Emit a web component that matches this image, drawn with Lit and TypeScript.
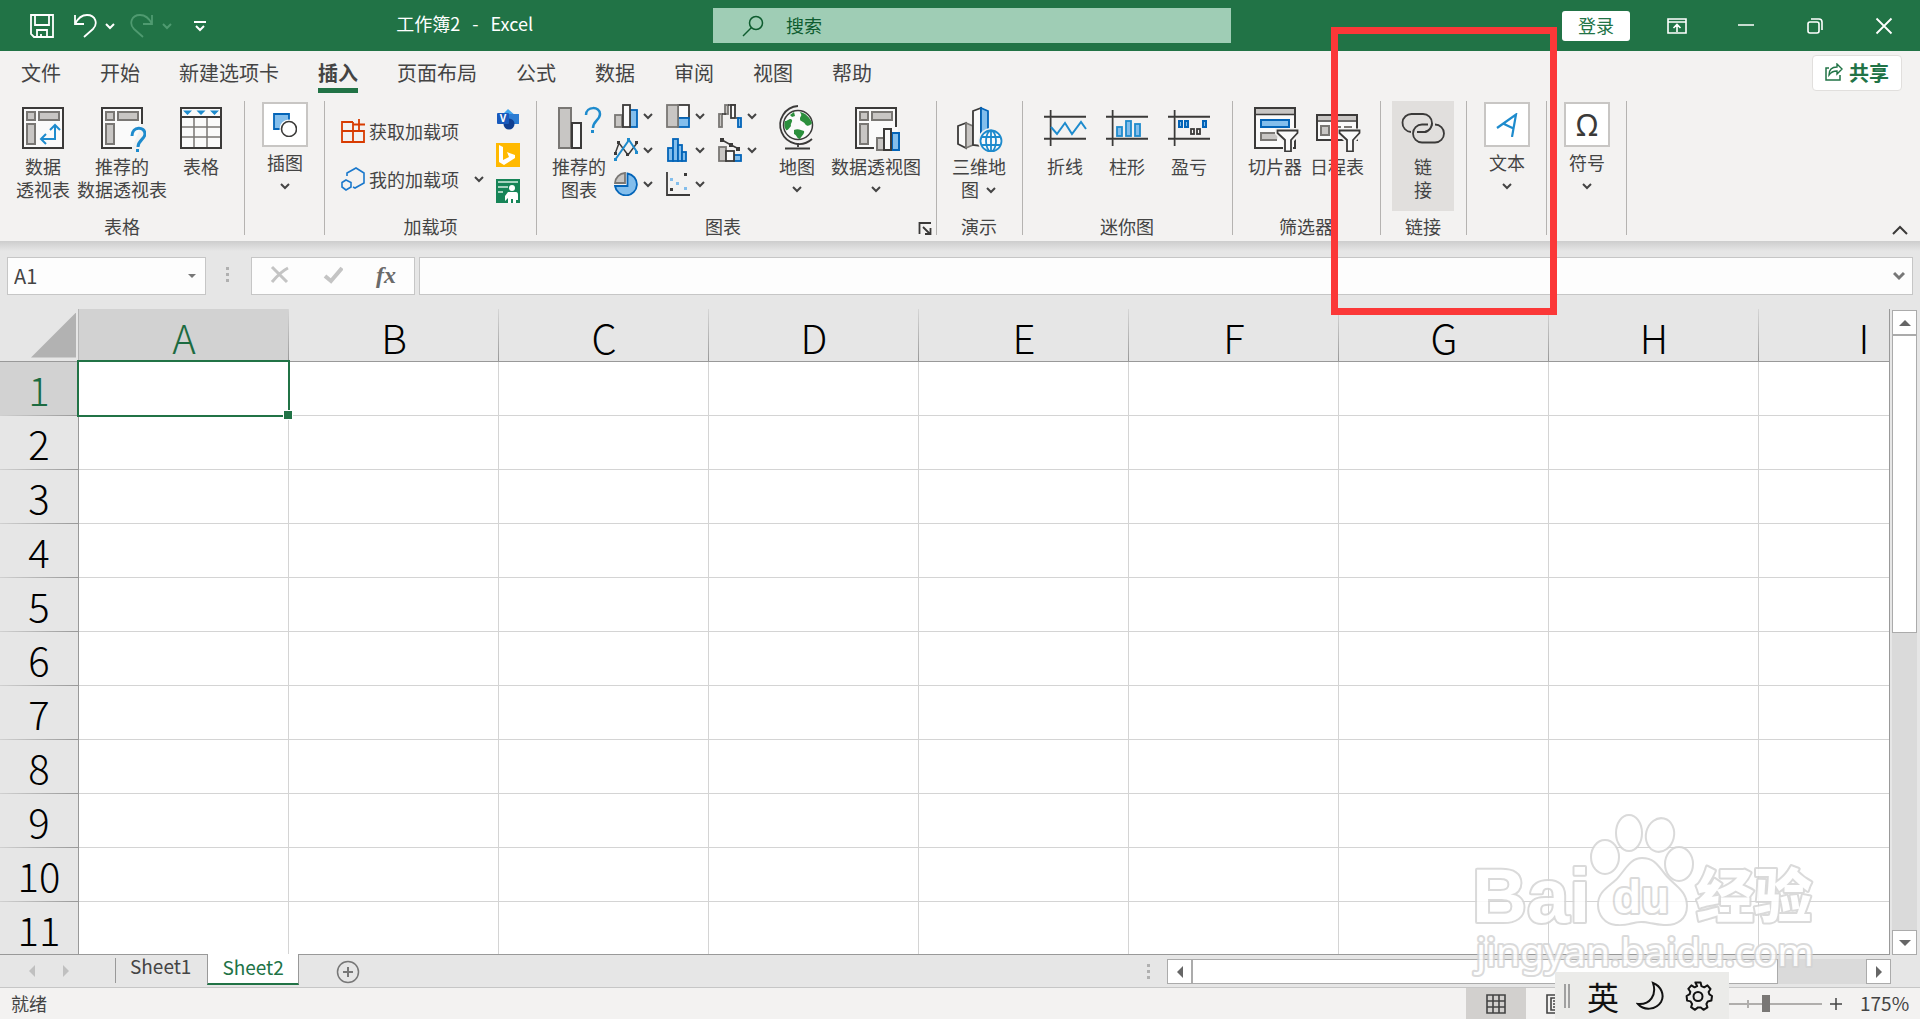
import { LitElement, html, svg, css, nothing } from "lit";
import { customElement, state } from "lit/decorators.js";
import { classMap } from "lit/directives/class-map.js";

const INK = "#3b3a39";
const GREY = "#797774";
const GREYF = "#c8c6c4";
const BLUE = "#1e8bcd";
const NAVY = "#0364b8";
const SKY = "#83beec";
const PAPER = "#fafafa";

const pivotFrame = svg`
  <g stroke=${GREY} stroke-width="2" fill=${GREYF}>
    <rect x="8" y="8" width="8" height="8"/><rect x="20" y="8" width="20" height="8"/><rect x="8" y="20" width="8" height="20"/>
  </g>`;

const big: Record<string, unknown> = {
  pivot: svg`<rect x="4" y="4" width="40" height="40" fill=${PAPER} stroke=${INK} stroke-width="2"/>${pivotFrame}
    <path d="M22 35H36V21M27 30l-5 5 5 5M31 26l5-5 5 5" fill="none" stroke=${BLUE} stroke-width="2"/>`,
  recpivot: svg`<path d="M34 44H4V4H44V20" fill=${PAPER} stroke=${INK} stroke-width="2"/>${pivotFrame}
    <path d="M34 32c0-10 13-10 13-2 0 5-7 6-7 13" fill="none" stroke=${BLUE} stroke-width="3"/><rect x="38" y="45" width="3" height="3" fill=${BLUE}/>`,
  table: svg`<rect x="4" y="4" width="40" height="40" fill=${PAPER} stroke=${INK} stroke-width="2"/>
    <path d="M17 13V43M30 13V43M5 23H43M5 33H43" stroke=${GREY} stroke-width="1.5"/><path d="M4 13H44" stroke=${INK} stroke-width="2"/>
    <path d="M6 6.500h9l-4.500 4.500zM19.500 6.500h9L24 11zM33 6.500h9l-4.500 4.500z" fill=${BLUE}/><rect x="4" y="4" width="40" height="40" fill="none" stroke=${INK} stroke-width="2"/>`,
  recchart: svg`<rect x="4" y="4" width="12" height="40" fill=${GREYF} stroke=${GREY} stroke-width="2"/>
    <rect x="17" y="19" width="9" height="25" fill=${PAPER} stroke=${INK} stroke-width="2"/>
    <path d="M31 11c0-9 14-9 14-1 0 6-7 7-7 14" fill="none" stroke=${BLUE} stroke-width="2.500"/><rect x="36" y="26" width="3" height="3" fill=${BLUE}/>`,
  globe: svg`<circle cx="25" cy="21" r="14.500" fill=${PAPER} stroke=${INK} stroke-width="1.500"/>
    <path d="M27 8c5 1 10 5 12 11-2 3-5 4-7 1-1-3-5-2-5-5s2-3 1-5zM12 17c3 0 3-2 6-2 3 2-1 4 0 7-2 2-3 5-5 4-2-3-2-6-1-9zM21 26c4-2 7 0 10 1 1 3-3 5-4 8-3 0-3-4-6-5zM17 11l4-3 1 4-3 1z" fill="#2b8f3c"/>
    <path d="M25 2a19 19 0 1 0 14 33M25 39v4M12 44.500H37" fill="none" stroke=${INK} stroke-width="1.800"/>`,
  pivotchart: svg`<path d="M23 44H4V4H44V22" fill=${PAPER} stroke=${INK} stroke-width="2"/>${pivotFrame}
    <rect x="22" y="22" width="24" height="24" fill=${PAPER} stroke="none"/>
    <path d="M44 4V23" stroke=${INK} stroke-width="2"/>
    <rect x="25" y="34" width="7" height="12" fill=${GREYF} stroke=${GREY} stroke-width="2"/>
    <rect x="40" y="29" width="7" height="17" fill=${SKY} stroke=${NAVY} stroke-width="2"/>
    <rect x="32" y="25" width="7" height="21" fill=${PAPER} stroke=${INK} stroke-width="2"/>`,
  map3d: svg`<path d="M3 22l8-3v25l-8-4z" fill=${PAPER} stroke=${INK} stroke-width="1.800"/><path d="M11 19l7 3v19l-7 3z" fill=${GREYF} stroke=${GREY} stroke-width="1.800"/>
    <path d="M18 7l8-3v38l-8-1z" fill=${PAPER} stroke=${INK} stroke-width="1.800"/><path d="M26 4l7 3v33h-7z" fill=${SKY} stroke=${NAVY} stroke-width="1.800"/>
    <circle cx="36" cy="37" r="13" fill="#f3f2f1"/><g fill="none" stroke=${BLUE} stroke-width="1.800"><circle cx="36" cy="37" r="10.500" fill=${PAPER}/><ellipse cx="36" cy="37" rx="5" ry="10.500"/><path d="M36 26v22M26 33H46M26 41H46"/></g>`,
  spline: svg`<path d="M3 13.500H45M3 35.500H45M10 6V42" stroke=${GREY} stroke-width="1"/><path d="M3 12.500H45M3 34.500H45M9.500 6V42" stroke=${INK} stroke-width="1.500"/>
    <path d="M10 23l6 7 8-11 7 11 9-12 5 7" fill="none" stroke=${BLUE} stroke-width="2"/>`,
  spcol: svg`<path d="M3 13.500H45M3 35.500H45M10 6V42" stroke=${GREY} stroke-width="1"/><path d="M3 12.500H45M3 34.500H45M9.500 6V42" stroke=${INK} stroke-width="1.500"/>
    <g fill=${SKY} stroke=${BLUE} stroke-width="1.800"><rect x="14" y="23" width="5" height="9"/><rect x="23" y="17" width="5" height="15"/><rect x="32" y="20" width="5" height="12"/></g>`,
  spwin: svg`<path d="M3 13.500H45M3 35.500H45M10 6V42" stroke=${GREY} stroke-width="1"/><path d="M3 12.500H45M3 34.500H45M9.500 6V42" stroke=${INK} stroke-width="1.500"/>
    <g fill=${SKY} stroke=${NAVY} stroke-width="2"><rect x="14" y="17" width="3" height="6"/><rect x="20" y="17" width="3" height="6"/><rect x="38" y="17" width="3" height="6"/></g>
    <g fill=${PAPER} stroke=${INK} stroke-width="1.800"><rect x="26" y="25" width="3" height="5"/><rect x="32" y="25" width="3" height="5"/></g>`,
  slicer: svg`<rect x="4" y="4" width="40" height="40" fill=${PAPER} stroke=${INK} stroke-width="2"/><path d="M5 5H43V10H5z" fill=${GREYF}/><path d="M4 10.500H44" stroke=${INK} stroke-width="1.500"/>
    <rect x="10" y="16" width="28" height="7" fill=${SKY} stroke=${NAVY} stroke-width="2"/><path d="M26 36H10V29H27" fill=${GREYF} stroke=${GREY} stroke-width="2"/>
    <path d="M24 24H48V32L42 38V48H32V38L24 30z" fill="#f3f2f1"/><path d="M26.500 26.500H46.500V29L40 36V47.500H34V36L26.500 29z" fill=${PAPER} stroke=${INK} stroke-width="1.800"/>`,
  timeline: svg`<rect x="4" y="11" width="40" height="25" fill=${PAPER} stroke=${INK} stroke-width="2"/><path d="M5 12H43V16H5z" fill=${GREYF}/><path d="M4 17H44" stroke=${INK} stroke-width="1.500"/>
    <path d="M8 22H16V31H8zM20 23H28M31 23H39" fill=${GREYF} stroke=${GREY} stroke-width="2"/>
    <path d="M24 24.500H48V32L42 38V48H32V38L24 30z" fill="#f3f2f1"/><path d="M26.500 26.500H46.500V29L40 36V47.500H34V36L26.500 29z" fill=${PAPER} stroke=${INK} stroke-width="1.800"/>`,
  link: svg`<g fill="none" stroke=${INK} stroke-width="1.800"><path d="M12 28a9 9 0 0 1 1-18H24a9 9 0 0 1 9 9 9 9 0 0 1-7 9H18"/><path d="M29 20H24a9 9 0 0 0-9 9 9 9 0 0 0 9 9H36a9 9 0 0 0 0-18" stroke="#e1dfdd" stroke-width="6"/><path d="M29 20.500H23a9 9 0 0 0 0 18H36a9 9 0 0 0 0-18"/><path d="M33 19a9 9 0 0 1-7 9H18"/></g>`,
};

const small: Record<string, unknown> = {
  column: svg`<rect x="1" y="11" width="7" height="12" fill=${GREYF} stroke=${GREY} stroke-width="1.800"/><rect x="16" y="6" width="7" height="17" fill=${SKY} stroke=${NAVY} stroke-width="1.800"/><rect x="9" y="1" width="7" height="22" fill=${PAPER} stroke=${INK} stroke-width="1.800"/>`,
  tree: svg`<rect x="12" y="1" width="11" height="13" fill=${PAPER} stroke=${INK} stroke-width="1.800"/><rect x="12" y="14" width="11" height="9" fill=${SKY} stroke=${NAVY} stroke-width="1.800"/><rect x="1" y="1" width="11" height="22" fill=${GREYF} stroke=${GREY} stroke-width="1.800"/>`,
  waterfall: svg`<g fill=${GREYF} stroke=${GREY} stroke-width="1.800"><rect x="1" y="10" width="3" height="13"/><rect x="7" y="1" width="3" height="9"/></g><path d="M4 10H8M10 1H18M18 14H21" stroke=${INK} stroke-width="1.500"/><rect x="13" y="1" width="4" height="13" fill=${PAPER} stroke=${INK} stroke-width="1.800"/><rect x="20" y="14" width="3" height="9" fill=${SKY} stroke=${NAVY} stroke-width="1.800"/>`,
  line: svg`<path d="M1 16L5 5l9 12L23 5" fill="none" stroke=${INK} stroke-width="1.500"/><path d="M1 22L15 2l8 12" fill="none" stroke=${BLUE} stroke-width="2"/><path d="M0 14h3v3H0zM3 3h3v3H3zM12 15h3v3h-3zM21 3h3v3h-3z" fill=${INK}/><path d="M0 20h3v3H0zM13 0h3v3h-3zM21 13h3v3h-3z" fill=${BLUE}/>`,
  histogram: svg`<g fill=${SKY} stroke=${NAVY} stroke-width="1.800"><rect x="2" y="10" width="5" height="13"/><rect x="7" y="1" width="5" height="22"/><rect x="12" y="7" width="4" height="16"/><rect x="16" y="14" width="4" height="9"/></g>`,
  combo: svg`<rect x="1" y="9" width="7" height="14" fill=${GREYF} stroke=${GREY} stroke-width="1.800"/><rect x="16" y="17" width="7" height="6" fill=${SKY} stroke=${NAVY} stroke-width="1.800"/><rect x="8" y="13" width="8" height="10" fill=${PAPER} stroke=${INK} stroke-width="1.800"/><path d="M4 2l9 5 8 4" fill="none" stroke=${INK} stroke-width="1.500"/><path d="M2 0h4v4H2zM11 5h4v4h-4zM18 9h4v4h-4z" fill=${INK}/>`,
  pie: svg`<path d="M13.500 1.500a11 11 0 1 1-12.500 12.500H13.500z" fill=${SKY} stroke=${NAVY} stroke-width="1.800"/><path d="M11 1V11H1A10.500 10.500 0 0 1 11 1z" fill=${GREYF} stroke=${GREY} stroke-width="1.800"/>`,
  scatter: svg`<path d="M1 0V23H24" fill="none" stroke=${INK} stroke-width="1.800"/><path d="M18 1h3v3h-3zM4 16h3v3H4z" fill=${INK}/><path d="M4 6h3v3H4zM10 10h3v3h-3zM18 15h3v3h-3z" fill=${SKY}/>`,
};

const chev = html`<svg class="chev" viewBox="0 0 12 12" aria-hidden="true"><path d="M2 4l4 4 4-4" fill="none" stroke="currentColor" stroke-width="2"/></svg>`;
const bigIcon = (k: string) => html`<svg class="i48" viewBox="0 0 48 48" aria-hidden="true">${big[k]}</svg>`;

interface Tool { icon: string; lines: string[]; arrow?: "below" | "inline"; active?: boolean; }

const TABS = ["文件", "开始", "新建选项卡", "插入", "页面布局", "公式", "数据", "审阅", "视图", "帮助"];
const CHARTS = [["column", "柱形图"], ["tree", "层次结构图"], ["waterfall", "瀑布图"], ["line", "折线图"], ["histogram", "统计图"], ["combo", "组合图"], ["pie", "饼图"], ["scatter", "散点图"]];
const COLS = "ABCDEFGHI".split("");
const ROWS = Array.from({ length: 11 }, (_, i) => i + 1);

@customElement("app-root")
export class AppRoot extends LitElement {
  @state() private tab = "插入";
  @state() private sheet = "Sheet2";

  static styles = css`
    :host { display: block; font-family: "Noto Sans CJK SC", "Noto Sans", sans-serif; color: #444; font-size: 18px; }
    * { box-sizing: border-box; }
    button, input { font: inherit; color: inherit; border: 0; background: none; padding: 0; margin: 0; border-radius: 0; }
    svg { display: block; flex: none; }
    .app { position: relative; height: 100vh; display: flex; flex-direction: column; background: #e6e6e6; overflow: hidden; }
    .chev { width: 12px; height: 12px; }
    .i48 { width: 48px; height: 48px; }
    .i24 { width: 24px; height: 24px; }
    .i20 { width: 20px; height: 20px; }

    .title { flex: none; height: 51px; background: #217346; color: #fff; display: grid; grid-template-columns: minmax(0, 713fr) minmax(0, 518fr) minmax(0, 689fr); align-items: center; }
    .left, .right, .quick, .doc { display: flex; align-items: center; }
    .left { padding-left: 30px; justify-content: space-between; }
    .quick .a { margin-left: 19px; }
    .quick .b { margin-left: 7px; }
    .quick .c { margin-left: 14px; }
    .quick .d { margin-left: 21px; }
    .off { color: #4f9a70; }
    .doc { padding: 0 180px 6px 0; line-height: 24px; gap: 12px; white-space: nowrap; }
    .search { height: 35px; background: #9fcdb5; color: #0e5c2f; display: flex; align-items: center; gap: 22px; padding-left: 29px; }
    .search input { flex: 1; min-width: 0; height: 35px; padding-bottom: 2px; outline: 0; }
    .search input::placeholder { color: #0e5c2f; opacity: 1; }
    .right { justify-content: flex-end; }
    .signin { width: 68px; height: 30px; line-height: 28px; padding-bottom: 2px; background: #fff; color: #217346; border-radius: 3px; margin-right: 12px; }
    .win { width: 69px; height: 51px; display: flex; justify-content: center; align-items: center; }
    .win:last-child { margin-right: 2px; }

    .ribbon { flex: none; background: #f3f2f1; }
    .tabs { height: 49px; display: flex; padding: 0 18px 0 21px; gap: 39px; font-size: 20px; }
    .tab { height: 42px; padding-top: 7px; line-height: 30px; border-bottom: 5px solid transparent; white-space: nowrap; }
    .tab.on { font-weight: 700; border-bottom-color: #217346; }
    .share { margin: 4px 0 0 auto; width: 90px; height: 36px; padding-bottom: 2px; display: flex; align-items: center; justify-content: center; gap: 6px; background: #fff; border: 1px solid #e1dfdd; border-radius: 4px; color: #217346; font-weight: 700; }
    .groups { display: flex; padding: 1px 0 6px 1px; }
    .group { height: 134px; flex: none; display: flex; flex-direction: column; border-right: 1px solid #b5b3b1; padding: 0 12px 0 11px; }
    .group.boxed { padding: 0 16px 0 17px; }
    .group.addins { padding: 0 16px; }
    .body { height: 118px; display: flex; align-items: flex-start; }
    .foot { height: 16px; line-height: 14px; display: flex; }
    .foot span { flex: 1; text-align: center; }
    .launch { width: 14px; height: 14px; margin: 2px -8px 0 0; }
    .with-launch span { padding-right: 20px; }
    .tool { min-width: 62px; height: 110px; padding: 3px 3px 0; display: flex; flex-direction: column; align-items: center; line-height: 23px; white-space: nowrap; }
    .tool .i48 { margin-bottom: 3px; }
    .tool.active { background: #e1dfdd; }
    .tool .chev { margin-top: 5px; }
    .tool .row { display: flex; align-items: center; gap: 6px; }
    .tool .row .chev { margin-top: 0; }
    .boxtool { width: 46px; padding-top: 1px; display: flex; flex-direction: column; align-items: center; line-height: 24px; white-space: nowrap; }
    .frame { width: 46px; height: 45px; background: #fff; border: 2px solid #c8c6c4; display: flex; align-items: center; justify-content: center; margin-bottom: 3px; }
    .omega { font: 30px/30px "Noto Sans", sans-serif; color: #3b3a39; }
    .boxtool .chev { margin-top: 6px; }
    .charts { display: grid; grid-template-columns: repeat(3, 52px); grid-auto-rows: 30px; row-gap: 4px; }
    .charts button { display: flex; align-items: center; gap: 4px; padding-left: 4px; }
    .addrows { width: 144px; padding-top: 6px; margin-right: 11px; }
    .addrows button { width: 144px; height: 48px; display: flex; align-items: center; gap: 4px; white-space: nowrap; }
    .addrows .chev { margin-left: auto; }
    .addicons { padding-top: 6px; display: flex; flex-direction: column; gap: 12px; }
    .collapse { margin: auto 12px 0 auto; }

    .formula { flex: none; height: 68px; display: flex; align-items: flex-start; padding: 16px 7px 0; background: linear-gradient(#cdcdcd, #e6e6e6 10px); }
    .fbox { height: 38px; background: #fdfdfd; border: 1px solid #c6c6c6; display: flex; align-items: center; }
    .namebox { width: 199px; padding: 0 9px 0 6px; }
    .namebox input { width: 160px; font-size: 20px; height: 34px; padding-bottom: 2px; }
    .namebox button { margin-left: auto; }
    .dots { width: 3px; height: 15px; background: repeating-linear-gradient(#b0b0b0 0 3px, transparent 3px 6px); }
    .formula .dots { margin: 10px 22px 0 20px; }
    .fbtns { width: 164px; justify-content: space-between; padding: 0 16px 2px; margin-right: 4px; }
    .fx { font: italic 700 24px/24px "Liberation Serif", serif; color: #6a6a6a; }
    .fbtns button { width: 24px; display: flex; justify-content: center; }
    .finput { flex: 1; min-width: 0; padding-right: 7px; }
    .finput input { flex: 1; min-width: 0; height: 34px; padding: 0 8px; outline: 0; }

    .work { flex: 1; min-height: 0; display: flex; }
    .view { flex: 1; min-width: 0; overflow: hidden; background: #fff; border-right: 1px solid #999; border-bottom: 1px solid #999; }
    table { border-collapse: separate; border-spacing: 0; }
    th { font-weight: 300; font-size: 40px; line-height: 46px; color: #000; padding: 0; text-align: center; background: #e6e6e6; }
    thead th { height: 53px; min-width: 210px; padding-top: 3px; border-bottom: 1px solid #999; background: linear-gradient(#d6d6d6, #999) right / 1px 100% no-repeat #e6e6e6; }
    thead th.corner { min-width: 79px; width: 79px; padding: 0; background: linear-gradient(#b5b5b5, #b5b5b5) right / 1px 100% no-repeat #e6e6e6; }
    .corner button { display: block; margin: 0 3px 0 auto; width: 45px; height: 45px; background: #b2b2b2; clip-path: polygon(100% 0, 100% 100%, 0 100%); }
    tbody th { height: 54px; border-right: 1px solid #999; background: linear-gradient(90deg, #d0d0d0, #999) bottom / 100% 1px no-repeat #e6e6e6; }
    th.sel, thead th.sel { background-color: #d2d2d2; color: #1c6b41; }
    td { padding: 0; border-right: 1px solid #d4d4d4; border-bottom: 1px solid #d4d4d4; }
    td.cursor { position: relative; }
    .ring { position: absolute; inset: -2px; border: 2px solid #217346; }
    .ring::after { content: ""; position: absolute; right: -5px; bottom: -5px; width: 8px; height: 8px; background: #217346; border: 1px solid #fff; }
    .vbar { flex: none; width: 30px; padding: 1px 3px 0 2px; display: flex; flex-direction: column; }
    .sbtn { width: 25px; height: 25px; flex: none; background: #fff; border: 1px solid #ababab; color: #666; display: flex; align-items: center; justify-content: center; }
    .track { flex: 1; background: #dadada; display: flex; }
    .vbar .track { flex-direction: column; }
    .vbar .thumb { height: 50%; background: #fff; border: 1px solid #ababab; }
    .hbar .thumb { width: 87%; background: #fff; border: 1px solid #ababab; }

    .sheets { flex: none; height: 33px; border-bottom: 1px solid #c6c6c6; display: flex; align-items: flex-start; font: 19px/22px "Noto Sans CJK SC", sans-serif; }
    .nav { display: flex; gap: 26px; padding: 10px 45px 0 28px; color: #c0c0c0; }
    .stab { display: flex; align-items: flex-start; height: 25px; margin-top: 3px; padding: 0 16px; line-height: 16px; }
    .first { border-left: 1px solid #999; padding-left: 14px; }
    .stab.on { position: relative; height: 31px; margin-top: -1px; line-height: 25px; background: #fff; color: #217346; border: solid #999; border-width: 0 1px; border-bottom: 2px solid #217346; padding: 0 14px; }
    .add { margin: 5px 0 0 37px; }
    .hbar { margin: 4px 29px 0 auto; width: 744px; display: flex; align-items: flex-start; }
    .hbar .dots { margin: 5px 17px 0 0; }
    .hbar .track { height: 25px; }

    .status { flex: none; height: 31px; background: #f3f2f1; display: flex; align-items: center; padding: 0 11px; }
    .status .ready { flex: 1; padding-bottom: 2px; }
    .vbtn { width: 60px; height: 31px; display: flex; align-items: center; justify-content: center; }
    .vbtn.on { background: #d2d0ce; }
    .zoom { display: flex; align-items: center; gap: 7px; margin-left: 7px; }
    .zoom input { appearance: none; width: 148px; height: 18px; background: linear-gradient(#b0aeac, #b0aeac) 50% 50% / 2px 8px no-repeat, linear-gradient(#b0aeac, #b0aeac) 0 50% / 100% 2px no-repeat; }
    .zoom input::-webkit-slider-thumb { appearance: none; width: 8px; height: 17px; background: #797775; }
    .sign { width: 14px; height: 14px; }
    .pct { margin-left: 17px; width: 49px; padding-bottom: 2px; font-size: 19px; text-align: right; white-space: nowrap; }

    .ime { position: absolute; right: 191px; bottom: 0; width: 174px; height: 47px; background: #ebebe9; color: #111; display: flex; align-items: center; padding-left: 9px; }
    .grip { width: 6px; height: 24px; border: solid #a0a0a0; border-width: 0 2px; margin-right: 17px; }
    .ime .lang { font-size: 32px; line-height: 40px; margin-right: 17px; }
    .ime .moon { margin-right: 17px; }
    .i30 { width: 30px; height: 30px; }
    .mark { position: absolute; right: 96px; bottom: 32px; width: 360px; height: 184px; pointer-events: none; }
    .mark .brand { font: 700 76px "Liberation Sans", sans-serif; }
    .mark .cjk { font: 900 58px "Noto Sans CJK SC", sans-serif; }
    .mark .du { font: 700 46px "Liberation Sans", sans-serif; }
    .mark .url { font: 400 39px "Noto Sans", sans-serif; }
    .callout { position: absolute; left: 1331px; top: 27px; width: 226px; height: 288px; border: 7px solid #fb3838; pointer-events: none; }
  `;

  private tool(t: Tool) {
    const last = t.lines[t.lines.length - 1];
    return html`<button class=${classMap({ tool: true, active: !!t.active })}>
      ${bigIcon(t.icon)}
      ${t.lines.slice(0, t.arrow === "inline" ? -1 : undefined).map((l) => html`<span>${l}</span>`)}
      ${t.arrow === "inline" ? html`<span class="row">${last}${chev}</span>` : nothing}
      ${t.arrow === "below" ? chev : nothing}
    </button>`;
  }

  private group(name: string, body: unknown, launch = false) {
    return html`<section class="group">
      <div class="body">${body}</div>
      <div class=${classMap({ foot: true, "with-launch": launch })}><span>${name}</span>
        ${launch ? html`<button class="launch" aria-label="图表选项"><svg viewBox="0 0 14 14" width="14" height="14"><path d="M1.500 13V2H13M5 6l7 7M12.500 7V13H7" fill="none" stroke="#3b3a39" stroke-width="1.800"/></svg></button>` : nothing}
      </div>
    </section>`;
  }

  private boxed(name: string, icon: unknown) {
    return html`<section class="group boxed"><button class="boxtool"><span class="frame">${icon}</span><span>${name}</span>${chev}</button></section>`;
  }

  private titleBar() {
    return html`<header class="title">
      <div class="left">
        <div class="quick">
          <button aria-label="保存"><svg class="i24" viewBox="0 0 24 24"><path d="M1 1H23V23H4L1 20zM5 1V11H19V1M7 23V16H17V23M11 20V23" fill="none" stroke="#fff" stroke-width="1.800"/></svg></button>
          <button class="a" aria-label="撤消"><svg class="i24" viewBox="0 0 24 24"><path d="M2 1V10H11M2 10C5 4 9 1 14 1c9 0 11 9 6 14L11 23" fill="none" stroke="#fff" stroke-width="1.800"/></svg></button>
          <button class="b" aria-label="撤消列表">${chev}</button>
          <button class="c off" aria-label="恢复"><svg class="i24" viewBox="0 0 24 24"><path d="M22 1V10H13M22 10C19 4 15 1 10 1 1 1-1 10 4 15L13 23" fill="none" stroke="currentColor" stroke-width="1.800"/></svg></button>
          <button class="b off" aria-label="恢复列表">${chev}</button>
          <button class="d" aria-label="自定义快速访问工具栏"><svg class="chev" viewBox="0 0 12 12"><path d="M0 2H12M2 6l4 4 4-4" fill="none" stroke="#fff" stroke-width="2"/></svg></button>
        </div>
        <div class="doc"><span>工作簿2</span><span>-</span><span>Excel</span></div>
      </div>
      <label class="search">
        <svg width="22" height="22" viewBox="0 0 22 22"><circle cx="14" cy="8" r="6.500" fill="none" stroke="#0e5c2f" stroke-width="1.500"/><path d="M9.500 12.500L1 21" stroke="#0e5c2f" stroke-width="1.500"/></svg>
        <input type="search" placeholder="搜索" aria-label="搜索">
      </label>
      <div class="right">
        <button class="signin">登录</button>
        <button class="win" aria-label="功能区显示选项"><svg class="i20" viewBox="0 0 20 20"><path d="M1 3H19V17H1zM1 6H19M10 16V9M6.500 12L10 8.500 13.500 12" fill="none" stroke="#fff" stroke-width="1.600"/></svg></button>
        <button class="win" aria-label="最小化"><svg class="i20" viewBox="0 0 20 20"><path d="M2 9H18" stroke="#fff" stroke-width="1.500"/></svg></button>
        <button class="win" aria-label="还原"><svg class="i20" viewBox="0 0 20 20"><rect x="3" y="6" width="11" height="11" rx="2" fill="none" stroke="#fff" stroke-width="1.600"/><path d="M6 3H14a3 3 0 0 1 3 3V14" fill="none" stroke="#fff" stroke-width="1.600"/></svg></button>
        <button class="win" aria-label="关闭"><svg class="i20" viewBox="0 0 20 20"><path d="M2.500 2.500l15 15M17.500 2.500l-15 15" stroke="#fff" stroke-width="1.800"/></svg></button>
      </div>
    </header>`;
  }

  private ribbon() {
    return html`<div class="ribbon">
      <nav class="tabs">
        ${TABS.map((t) => html`<button class=${classMap({ tab: true, on: t === this.tab })} @click=${() => (this.tab = t)}>${t}</button>`)}
        <button class="share"><svg width="18" height="18" viewBox="0 0 18 18"><path d="M4 5H1V17H15V12" fill="none" stroke="#217346" stroke-width="1.500"/><path d="M4 12c0-5 3-8 8-8V1l5 5-5 5V8C8 8 6 9 4 12z" fill="none" stroke="#217346" stroke-width="1.400"/></svg>共享</button>
      </nav>
      <div class="groups">
        ${this.group("表格", [this.tool({ icon: "pivot", lines: ["数据", "透视表"] }), this.tool({ icon: "recpivot", lines: ["推荐的", "数据透视表"] }), this.tool({ icon: "table", lines: ["表格"] })])}
        ${this.boxed("插图", html`<svg class="i24" viewBox="0 0 24 24"><path d="M1 1H16V16H1z" fill=${SKY} stroke=${NAVY} stroke-width="1.800"/><circle cx="16" cy="16" r="9.500" fill="#fff"/><circle cx="16" cy="16" r="7.500" fill="#fff" stroke=${INK} stroke-width="1.600"/></svg>`)}
        <section class="group addins">
          <div class="body">
            <div class="addrows">
              <button><svg class="i24" viewBox="0 0 24 24"><path d="M12 3H1V23H23V12H1M12 3V23M18 0V11M12.500 5.500H24" fill="none" stroke="#d83b01" stroke-width="1.800"/></svg>获取加载项</button>
              <button><svg class="i24" viewBox="0 0 24 24"><path d="M6 9V6l9-5 8 5V16l-9 5-2-1M5 13l5 2.500V20l-5 3-4-3V15.500z" fill="none" stroke="#1a78cc" stroke-width="1.600"/></svg>我的加载项${chev}</button>
            </div>
            <div class="addicons">
              <button aria-label="Visio"><svg class="i24" viewBox="0 0 24 24"><path d="M12 2l8 7-8 8-7-8z" fill="#41a5ee"/><path d="M12 7H23V17H12z" fill="#2b7cd3"/><circle cx="13" cy="17" r="5.500" fill="#103f91"/><rect x="1" y="6" width="12" height="11" rx="1" fill="#185abd"/><text x="7" y="15" font-size="10" font-weight="700" fill="#fff" text-anchor="middle" font-family="Open Sans, sans-serif">V</text></svg></button>
              <button aria-label="必应地图"><svg class="i24" viewBox="0 0 24 24"><path d="M0 0H24V24H0z" fill="#ffb900"/><path d="M3 2l4 2V17l6-3-2-5 8 3v3l-11 7-5-3z" fill="#fff"/></svg></button>
              <button aria-label="人员图表"><svg class="i24" viewBox="0 0 24 24"><path d="M0 0H24V24H0z" fill="#168457"/><path d="M2 2H22V4H2zM2 7H12V9H2zM2 12H7V14H2z" fill="#a5d3bf"/><circle cx="16" cy="9" r="3" fill="#fff"/><path d="M12 13H20q2 0 2 3v5h-2v3h-3v-4h-2v4h-3v-5l-3 3V17z" fill="#fff"/></svg></button>
            </div>
          </div>
          <div class="foot"><span>加载项</span></div>
        </section>
        ${this.group("图表", [
          this.tool({ icon: "recchart", lines: ["推荐的", "图表"] }),
          html`<div class="charts">${CHARTS.map(([k, n]) => html`<button aria-label=${n}><svg class="i24" viewBox="0 0 24 24">${small[k]}</svg>${chev}</button>`)}</div>`,
          this.tool({ icon: "globe", lines: ["地图"], arrow: "below" }),
          this.tool({ icon: "pivotchart", lines: ["数据透视图"], arrow: "below" }),
        ], true)}
        ${this.group("演示", this.tool({ icon: "map3d", lines: ["三维地", "图"], arrow: "inline" }))}
        ${this.group("迷你图", [this.tool({ icon: "spline", lines: ["折线"] }), this.tool({ icon: "spcol", lines: ["柱形"] }), this.tool({ icon: "spwin", lines: ["盈亏"] })])}
        ${this.group("筛选器", [this.tool({ icon: "slicer", lines: ["切片器"] }), this.tool({ icon: "timeline", lines: ["日程表"] })])}
        ${this.group("链接", this.tool({ icon: "link", lines: ["链", "接"], active: true }))}
        ${this.boxed("文本", html`<svg class="i24" viewBox="0 0 24 24"><path d="M2 15L21 1.500 17 24M8 10.500L18.500 15.500" fill="none" stroke=${BLUE} stroke-width="2.200"/></svg>`)}
        ${this.boxed("符号", html`<span class="omega">Ω</span>`)}
        <button class="collapse" aria-label="折叠功能区"><svg width="16" height="10" viewBox="0 0 16 10"><path d="M1 9l7-7 7 7" fill="none" stroke="#3b3a39" stroke-width="2"/></svg></button>
      </div>
    </div>`;
  }

  private formulaBar() {
    return html`<div class="formula">
      <div class="fbox namebox"><input aria-label="名称框" value="A1"><button aria-label="名称列表"><svg width="8" height="4" viewBox="0 0 8 4"><path d="M0 0H8L4 4z" fill="#777"/></svg></button></div>
      <span class="dots"></span>
      <div class="fbox fbtns">
        <button aria-label="取消"><svg class="i20" viewBox="0 0 20 20"><path d="M2 2l15 15M18 3C12 6 7 11 2 17" fill="none" stroke="#c4c4c4" stroke-width="3"/></svg></button>
        <button aria-label="输入"><svg class="i20" viewBox="0 0 20 20"><path d="M2 11l6 5L19 3" fill="none" stroke="#c4c4c4" stroke-width="4"/></svg></button>
        <button class="fx" aria-label="插入函数">fx</button>
      </div>
      <div class="fbox finput"><input aria-label="编辑栏"><button aria-label="展开编辑栏"><svg width="12" height="10" viewBox="0 0 12 10"><path d="M1 2l5 5 5-5" fill="none" stroke="#777" stroke-width="3"/></svg></button></div>
    </div>`;
  }

  private arrow(d: string) {
    return html`<svg width="12" height="12" viewBox="0 0 12 12"><path d=${d} fill="currentColor"/></svg>`;
  }

  private grid() {
    return html`<div class="work">
      <div class="view">
        <table>
          <thead><tr><th class="corner"><button aria-label="全选"></button></th>${COLS.map((c, i) => html`<th scope="col" class=${i ? "" : "sel"}>${c}</th>`)}</tr></thead>
          <tbody>${ROWS.map((r) => html`<tr><th scope="row" class=${r === 1 ? "sel" : ""}>${r}</th>${COLS.map((_, i) => (r === 1 && i === 0 ? html`<td class="cursor"><div class="ring"></div></td>` : html`<td></td>`))}</tr>`)}</tbody>
        </table>
      </div>
      <div class="vbar">
        <button class="sbtn" aria-label="向上滚动">${this.arrow("M0 9L6 3l6 6z")}</button>
        <div class="track"><div class="thumb"></div></div>
        <button class="sbtn" aria-label="向下滚动">${this.arrow("M0 3L6 9l6-6z")}</button>
      </div>
    </div>`;
  }

  private bottom() {
    return html`<div class="sheets">
      <div class="nav"><button aria-label="上一个工作表"><svg width="8" height="12" viewBox="0 0 8 12"><path d="M7 0V12L1 6z" fill="currentColor"/></svg></button><button aria-label="下一个工作表"><svg width="8" height="12" viewBox="0 0 8 12"><path d="M1 0V12L7 6z" fill="currentColor"/></svg></button></div>
      <button class=${classMap({ stab: true, first: this.sheet !== "Sheet1", on: this.sheet === "Sheet1" })} @click=${() => (this.sheet = "Sheet1")}>Sheet1</button>
      <button class=${classMap({ stab: true, on: this.sheet === "Sheet2" })} @click=${() => (this.sheet = "Sheet2")}>Sheet2</button>
      <button class="add" aria-label="新工作表"><svg width="24" height="24" viewBox="0 0 24 24"><circle cx="12" cy="12" r="10.500" fill="none" stroke="#777" stroke-width="1.500"/><path d="M12 7V17M7 12H17" stroke="#777" stroke-width="2"/></svg></button>
      <div class="hbar"><span class="dots"></span>
        <button class="sbtn" aria-label="向左滚动">${this.arrow("M9 0V12L3 6z")}</button>
        <div class="track"><div class="thumb"></div></div>
        <button class="sbtn" aria-label="向右滚动">${this.arrow("M3 0V12L9 6z")}</button>
      </div>
    </div>
    <footer class="status">
      <span class="ready">就绪</span>
      <button class="vbtn on" aria-label="普通"><svg class="i20" viewBox="0 0 20 20"><path d="M1 1H19V19H1zM7 1V19M13 1V19M1 7H19M1 13H19" fill="none" stroke="#444" stroke-width="1.600"/></svg></button>
      <button class="vbtn" aria-label="页面布局"><svg class="i20" viewBox="0 0 20 20"><path d="M1 1H19V19H1zM5 4H15V16H5zM7 7H13M7 10H13M7 13H13" fill="none" stroke="#444" stroke-width="1.600"/></svg></button>
      <button class="vbtn" aria-label="分页预览"><svg class="i20" viewBox="0 0 20 20"><path d="M1 1H19V19H1zM1 12H12V1" fill="none" stroke="#444" stroke-width="1.600"/></svg></button>
      <div class="zoom">
        <button aria-label="缩小"><svg class="sign" viewBox="0 0 14 14"><path d="M1 7H13" stroke="#444" stroke-width="1.500"/></svg></button>
        <input type="range" min="0" max="100" value="63" aria-label="缩放">
        <button aria-label="放大"><svg class="sign" viewBox="0 0 14 14"><path d="M1 7H13M7 1V13" stroke="#444" stroke-width="1.500"/></svg></button>
      </div>
      <span class="pct">175%</span>
    </footer>`;
  }

  private watermark() {
    const shapes = svg`
      <text class="brand" x="8" y="119">Bai</text>
      <text class="cjk" x="232" y="114">经验</text>
      <text class="url" x="12" y="163">jingyan.baidu.com</text>
      <ellipse cx="141" cy="54" rx="13" ry="16"/><ellipse cx="165" cy="30" rx="12" ry="17"/><ellipse cx="196" cy="32" rx="13" ry="16" transform="rotate(14 196 32)"/><ellipse cx="215" cy="61" rx="13" ry="16"/>
      <path d="M178 56c14 0 17 11 26 20s18 14 18 27-10 19-22 18-15-3-23-3-14 4-25 3-17-10-17-19c0-14 12-18 20-27s12-19 23-19z"/>`;
    return html`<svg class="mark" viewBox="0 0 360 184" aria-hidden="true">
      <g fill="#fff" stroke="#d4d4d4" stroke-width="4" stroke-linejoin="round" paint-order="stroke" opacity="0.85">${shapes}
        <text class="du" x="149" y="110">du</text></g>
    </svg>`;
  }

  render() {
    return html`<div class="app">
      ${this.titleBar()}${this.ribbon()}${this.formulaBar()}${this.grid()}${this.bottom()}
      ${this.watermark()}
      <div class="ime"><span class="grip"></span><button class="lang">英</button>
        <button class="moon" aria-label="半角"><svg class="i30" viewBox="0 0 30 30"><path d="M17 2c8 3 12 12 8 19-5 8-17 9-23 2 12 1 19-9 15-21z" fill="none" stroke="#111" stroke-width="2"/></svg></button>
        <button aria-label="设置"><svg class="i30" viewBox="0 0 30 30"><path d="M12.400 1.500h5.200l.8 3.600 2.800 1.200 3.200-1.900 3.100 3.600-1.900 3 .8 2.400 2.600 1.600-.6 4.600-3.600.8-1.400 2.600 1 3.400-3.900 2.400-2.700-2.400h-2.800l-3 2.400-3.900-2.600 1-3.300-1.500-2.500-3.500-.8-.5-4.600 3.100-1.800.6-2.400-2-3 3.100-3.400 3.200 1.900 2.500-1.200z" fill="none" stroke="#111" stroke-width="2" stroke-linejoin="round"/><circle cx="15" cy="15.500" r="4.500" fill="none" stroke="#111" stroke-width="2"/></svg></button>
      </div>
      <div class="callout"></div>
    </div>`;
  }
}
